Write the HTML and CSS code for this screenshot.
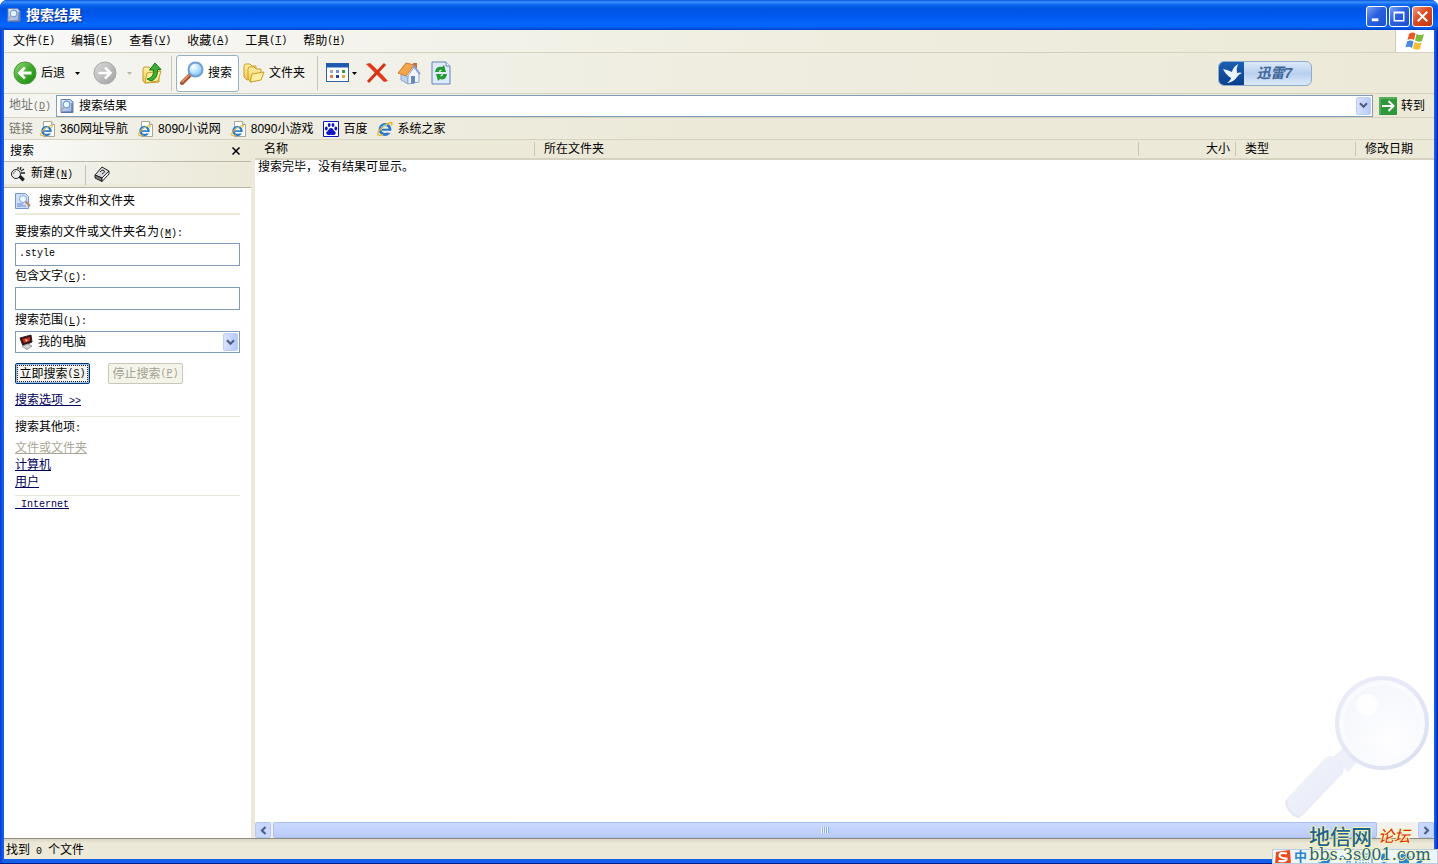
FILE: index.html
```html
<!DOCTYPE html>
<html lang="zh-CN">
<head>
<meta charset="utf-8">
<title>搜索结果</title>
<link rel="stylesheet" href="styles.css">
</head>
<body>
<svg class="defs" aria-hidden="true">
  <defs>
    <linearGradient id="gGreen" x1="0" y1="0" x2="1" y2="1"><stop offset="0" stop-color="#9bd87c"/><stop offset=".5" stop-color="#3fa92c"/><stop offset="1" stop-color="#188a12"/></linearGradient>
    <linearGradient id="gGrey" x1="0" y1="0" x2="1" y2="1"><stop offset="0" stop-color="#dcdcdc"/><stop offset="1" stop-color="#9f9f9f"/></linearGradient>
    <linearGradient id="gFolder" x1="0" y1="0" x2="0" y2="1"><stop offset="0" stop-color="#fff3a6"/><stop offset="1" stop-color="#f0c64c"/></linearGradient>
    <radialGradient id="gLens" cx=".35" cy=".3" r=".8"><stop offset="0" stop-color="#fff"/><stop offset=".5" stop-color="#b8e2fb"/><stop offset="1" stop-color="#70b9ee"/></radialGradient>
    <linearGradient id="gPage" x1="0" y1="0" x2="1" y2="1"><stop offset="0" stop-color="#e8f1ff"/><stop offset="1" stop-color="#8fa9dc"/></linearGradient>
    <linearGradient id="gRing" x1="0" y1="0" x2="1" y2="1"><stop offset="0" stop-color="#eceef8"/><stop offset="1" stop-color="#dadff0"/></linearGradient>
    <radialGradient id="gGlass" cx=".6" cy=".7" r=".8"><stop offset="0" stop-color="#fefeff"/><stop offset="1" stop-color="#f3f5fc"/></radialGradient>
    <linearGradient id="gHandle" x1="0" y1="0" x2="1" y2="1"><stop offset="0" stop-color="#f5f6fc"/><stop offset="1" stop-color="#e4e8f5"/></linearGradient>
  </defs>
  <symbol id="doc" viewBox="0 0 16 16"><path d="M2 1.500h9.500l2.500 2.500v10.500H2z" fill="url(#gPage)" stroke="#6a7fb4"/><path d="M13 5v9M3 14h11" stroke="#52689f"/><circle cx="7.500" cy="6.500" r="3.300" fill="#e3f6ff" stroke="#7d9cc8" stroke-width="1.200"/><path d="M5 9l-3 4" stroke="#a8acb8" stroke-width="1.800"/></symbol>
  <symbol id="chev" viewBox="0 0 9 7"><path d="M1 1.200l3.500 3.500L8 1.200" fill="none" stroke="#4d6185" stroke-width="2.200"/></symbol>
  <symbol id="ie" viewBox="0 0 16 16"><circle cx="8" cy="8.500" r="5" fill="none" stroke="#2878c8" stroke-width="2.800"/><path d="M5 8.700h8.500" stroke="#2878c8" stroke-width="2"/><path d="M10.500 10.800h5" stroke="#f5f4ee" stroke-width="2"/><path d="M1.500 14.500C-1 12 5 4 14.500 1.500c1 .5.500 2-.500 3M2 14.500c1.500 0 3-.500 4-1.200" fill="none" stroke="#e6b52c" stroke-width="1.300"/><path d="M4 6.500Q7 3 10 4.500" fill="none" stroke="#7ec9f4"/></symbol>
  <symbol id="iepage" viewBox="0 0 16 16"><path d="M3.500.5h8l3 3v12h-11z" fill="#fff" stroke="#aaa698"/><path d="M11.500.5v3h3" fill="#eee" stroke="#aaa698"/><use href="#ie" x="0" y="3" width="13" height="13"/></symbol>
  <symbol id="folder" viewBox="0 0 22 20"><path d="M1 3l1-2h5l2 2h4v12l-9 2-3-3z" fill="url(#gFolder)" stroke="#c99c2c"/><path d="M5 6l1-2h5l2 2h5v10l-10 3-3-3z" fill="url(#gFolder)" stroke="#c99c2c"/><path d="M7 19L9 11l12-2-3 8z" fill="#fff0a0" stroke="#c99c2c"/></symbol>
</svg>
<div class="window">
  <header class="title">
    <svg class="i16"><use href="#doc"/></svg>
    <h1>搜索结果</h1>
    <div class="wbtns">
      <button class="wbtn" aria-label="最小化"><svg viewBox="0 0 20 20"><path d="M5 13.500h7" stroke="#fff" stroke-width="3"/></svg></button>
      <button class="wbtn" aria-label="最大化"><svg viewBox="0 0 20 20"><path d="M4.500 5.500h10v9h-10zM4 6h11" fill="none" stroke="#fff" stroke-width="1.500"/></svg></button>
      <button class="wbtn close" aria-label="关闭"><svg viewBox="0 0 20 20"><path d="M5 5l10 10M15 5L5 15" stroke="#fff" stroke-width="2.200"/></svg></button>
    </div>
  </header>
  <nav class="menu">
    <button>文件<span class="m">(<u>F</u>)</span></button>
    <button>编辑<span class="m">(<u>E</u>)</span></button>
    <button>查看<span class="m">(<u>V</u>)</span></button>
    <button>收藏<span class="m">(<u>A</u>)</span></button>
    <button>工具<span class="m">(<u>T</u>)</span></button>
    <button>帮助<span class="m">(<u>H</u>)</span></button>
    <div class="flag"><svg width="20" height="20" viewBox="0 0 20 20"><path d="M4 3q3-2.500 6.500-.500L9 9Q6 7 2.500 9z" fill="#e8582a"/><path d="M11.500 3q3.500 2 7.500 0l-2 7q-3.500 1.500-7-.500z" fill="#7dbb3c"/><path d="M2 10.500q3.500-2 6.500 0L7 17q-3-2-6.500-.500z" fill="#4a8be0"/><path d="M9.500 11q3.500 2 7 .5L15 18q-4 1.500-7-.500z" fill="#f5bd32"/></svg></div>
  </nav>
  <div class="tools">
    <button class="tb">
      <svg width="24" height="24" viewBox="0 0 24 24"><circle cx="12" cy="12" r="11" fill="url(#gGreen)" stroke="#48943a"/><path d="M18.500 12H7M12 6.500L6.500 12l5.500 5.500" fill="none" stroke="#fff" stroke-width="2.800"/></svg>后退</button>
    <button class="drop" aria-label="后退列表"><svg width="5" height="3" viewBox="0 0 5 3"><path d="M0 0h5L2.500 3z"/></svg></button>
    <button class="tb" aria-label="前进">
      <svg width="24" height="24" viewBox="0 0 24 24"><circle cx="12" cy="12" r="11" fill="url(#gGrey)" stroke="#a9a9a9"/><path d="M5.500 12H17M12 6.500l5.500 5.500-5.500 5.500" fill="none" stroke="#fff" stroke-width="2.600"/></svg></button>
    <button class="drop off" aria-label="前进列表"><svg width="5" height="3" viewBox="0 0 5 3"><path d="M0 0h5L2.500 3z" fill="#b8b5a8"/></svg></button>
    <button class="tb" aria-label="向上">
      <svg width="22" height="24" viewBox="0 0 22 24"><path d="M2 8l1-2h5l2 2h8v13L4 22l-2-2z" fill="url(#gFolder)" stroke="#c99c2c"/><path d="M4 22L6 12l14-2-3 10z" fill="#fff0a0" stroke="#c99c2c"/><path d="M6 18q7-1 6.500-9H8.500L14 2l6 6.500h-3.500Q17 18 10 20z" fill="#3caf35" stroke="#1c7a1c"/></svg></button>
    <i class="sep"></i>
    <button class="tb on">
      <svg width="24" height="24" viewBox="0 0 24 24"><path d="M2 22l8-8" stroke="#a8542c" stroke-width="4" stroke-linecap="round"/><path d="M2 21l7-7" stroke="#e5a070" stroke-width="1.500"/><circle cx="15.500" cy="8.500" r="7" fill="url(#gLens)" stroke="#6f9fd4" stroke-width="2"/></svg>搜索</button>
    <button class="tb fold"><svg width="22" height="20"><use href="#folder"/></svg>文件夹</button>
    <i class="sep"></i>
    <button class="tb ico view" aria-label="查看">
      <svg width="24" height="20" viewBox="0 0 24 20"><rect x=".5" y=".5" width="22" height="18" fill="#fff" stroke="#2d62a8"/><path d="M0 2.500h23" stroke="#1f58b0" stroke-width="4"/><path d="M4 7h3v3H4z" fill="#a8a8c0"/><path d="M10 7h3v3h-3z" fill="#6f8fd0"/><path d="M16 7h3v3h-3z" fill="#30a040"/><path d="M4 12h3v3H4z" fill="#e07850"/><path d="M10 12h3v3h-3z" fill="#203f98"/><path d="M16 12h3v3h-3z" fill="#e0a838"/></svg><svg width="5" height="3" viewBox="0 0 5 3"><path d="M0 0h5L2.500 3z"/></svg></button>
    <button class="tb ico" aria-label="删除"><svg width="24" height="24" viewBox="0 0 24 24"><path d="M1 3l4-1q8 7 18 18l-4 1Q10 12 1 3z" fill="#e23a1c"/><path d="M20 3L3 21" stroke="#d23216" stroke-width="3"/></svg></button>
    <button class="tb ico" aria-label="主页"><svg width="24" height="24" viewBox="0 0 24 24"><path d="M16 2h4v7h-4z" fill="#c96a38"/><path d="M4 12l7 4v7l-7-4z" fill="#bcd0f3" stroke="#8da5d1"/><path d="M11 15l6-9 5 7v8l-11 2z" fill="#f1f5ff" stroke="#8da5d1"/><path d="M1 12L9 2l8 2-8 11z" fill="#f5a64c" stroke="#cc7b30"/><path d="M16 4l7 9" stroke="#8da5d1" stroke-width="2"/><path d="M14 15h4v7l-4 1z" fill="#6588b8"/></svg></button>
    <button class="tb ico last" aria-label="刷新"><svg width="20" height="24" viewBox="0 0 20 24"><path d="M1 1h14l4 4v18H1z" fill="#dfeafc" stroke="#6282b9"/><path d="M15 1v4h4" fill="#fff" stroke="#6282b9"/><path d="M4 11q1-6 7-5l2-2 2 7H9l2-2Q8 8 8 11zM16 13q-1 7-7 5l-2 2-2-7h6l-2 2q3 1 3-2z" fill="#209c31"/></svg></button>
    <button class="thunder"><svg width="25" height="24" viewBox="0 0 25 24"><path d="M4 8q5 1 9 3 1-5 6-8-2 5-1 9 3-1 5 0-3 1-5 4-3 5-10 6 4-3 4-5-5-3-8-9z" fill="#e9f6ff"/></svg><span>迅雷7</span></button>
  </div>
  <div class="address">
    <label for="addr">地址<span class="m">(<u>D</u>)</span></label>
    <div class="field"><svg class="i16"><use href="#doc"/></svg><input id="addr" value="搜索结果"><button class="chev" aria-label="地址列表"><svg width="9" height="7"><use href="#chev"/></svg></button></div>
    <button class="go"><svg width="18" height="18" viewBox="0 0 18 18"><rect width="18" height="18" rx="1" fill="#2f9639"/><path d="M1 17V1h16" fill="none" stroke="#7cc47c"/><path d="M3 9h11M9.500 4l5 5-5 5" fill="none" stroke="#fff" stroke-width="2"/></svg>转到</button>
  </div>
  <nav class="links">
    <span>链接</span>
    <a href="#"><svg class="i16"><use href="#iepage"/></svg>360网址导航</a>
    <a href="#"><svg class="i16"><use href="#iepage"/></svg>8090小说网</a>
    <a href="#"><svg class="i16"><use href="#iepage"/></svg>8090小游戏</a>
    <a href="#"><svg class="i16" viewBox="0 0 16 16"><path d="M.5.5h15v15H.5z" fill="#fff" stroke="#1115c4"/><path d="M8 7q2 0 2.500 2c1 1.500 3 2 2 4q-1 1.500-4.500.7Q4.500 14.500 3.500 13c-1-2 1-2.500 2-4Q6 7 8 7z" fill="#1115c4"/><g fill="#1115c4"><ellipse cx="3.300" cy="7.500" rx="1.400" ry="1.900"/><ellipse cx="6.200" cy="4" rx="1.400" ry="2"/><ellipse cx="10" cy="4" rx="1.400" ry="2"/><ellipse cx="12.800" cy="7.500" rx="1.400" ry="1.900"/></g></svg>百度</a>
    <a href="#"><svg class="i16"><use href="#ie"/></svg>系统之家</a>
  </nav>
  <main>
    <aside>
      <div class="phead"><h2>搜索</h2><button aria-label="关闭"><svg width="8" height="8" viewBox="0 0 8 8"><path d="M.5.5l7 7M7.500.5l-7 7" stroke="#000" stroke-width="1.500"/></svg></button></div>
      <div class="ptools">
        <button><svg class="i16" viewBox="0 0 16 16"><circle cx="6" cy="8" r="4.500" fill="#eee" stroke="#222"/><path d="M9 11l4 4M8 1v2M11 1l-1 3M14 3l-3 2M15 7h-4" stroke="#222" stroke-width="1.300"/><path d="M3.500 8q0-2.500 2.500-3" fill="none" stroke="#888"/><path d="M10 10l4 4" stroke="#222" stroke-width="2.500"/></svg><span>新建<span class="m">(<u>N</u>)</span></span></button>
        <i class="psep"></i>
        <button aria-label="索引"><svg class="i16" viewBox="0 0 16 16"><path d="M1 9l7-8 7 4-7 7z" fill="#d8d8d8" stroke="#222"/><path d="M1 9v3l7 3.500V12z" fill="#777" stroke="#222"/><path d="M8 12l7-7v3l-7 7.500z" fill="#fff" stroke="#222"/><path d="M6 6q2-3 4-1.500T8 8" fill="none" stroke="#333"/></svg></button>
      </div>
      <form class="pane">
        <h3><svg class="i16" viewBox="0 0 16 16"><path d="M.5.500h10l3 3v12H.5z" fill="#cfe0ff" stroke="#7594d0"/><path d="M2 11h6M2 13h9" stroke="#6584c5"/><circle cx="8" cy="6" r="3.500" fill="#eefaff" stroke="#7ba5cf"/><path d="M10.500 8.500l4.500 4.500" stroke="#b8845c" stroke-width="2"/></svg>搜索文件和文件夹</h3>
        <label for="fname">要搜索的文件或文件夹名为<span class="m">(<u>M</u>):</span></label>
        <input id="fname" class="m" value=".style">
        <label for="ftext">包含文字<span class="m">(<u>C</u>):</span></label>
        <input id="ftext" class="m">
        <label for="scope">搜索范围<span class="m">(<u>L</u>):</span></label>
        <div class="field combo"><svg class="i16" viewBox="0 0 16 16"><path d="M2 4l11-3 1 7-9 4z" fill="#2c1114" stroke="#3a2222"/><path d="M4 5l8-2v4L6 9z" fill="#c42c1d"/><path d="M7 5l3 1-2 2z" fill="#ffd0a0"/><path d="M4 12l6-2 4 2-5 3.500z" fill="#d6d4d2" stroke="#999"/></svg><select id="scope"><option>我的电脑</option></select><span class="chev"><svg width="9" height="7"><use href="#chev"/></svg></span></div>
        <div class="acts"><button type="button" class="act def">立即搜索<span class="m">(<u>S</u>)</span></button><button type="button" class="act" disabled>停止搜索<span class="m">(<u>P</u>)</span></button></div>
        <a class="opt" href="#">搜索选项<span class="m"> &gt;&gt;</span></a>
        <section class="other">
          <p>搜索其他项<span class="m">:</span></p>
          <a class="off" href="#">文件或文件夹</a>
          <a href="#">计算机</a>
          <a href="#">用户</a>
        </section>
        <section class="net"><a class="m" href="#">&nbsp;Internet</a></section>
      </form>
    </aside>
    <div class="results">
      <table>
        <colgroup><col class="c1"><col><col class="c3"><col class="c4"><col class="c5"></colgroup>
        <thead><tr><th>名称</th><th>所在文件夹</th><th class="r">大小</th><th>类型</th><th>修改日期</th></tr></thead>
        <tbody><tr><td colspan="5">搜索完毕，没有结果可显示。</td></tr></tbody>
      </table>
      <svg class="glass" width="148" height="148" viewBox="0 0 148 148"><path d="M49 84L60 74l14 14-10 11z" fill="#eef0f9"/><path d="M3 125L42 84q7-3 13 3t4 13L18 143q-7 2-12-4t-3-14z" fill="url(#gHandle)"/><path d="M3 127q-2 5 3 11t10 6" fill="none" stroke="#e3e6f3" stroke-width="2"/><circle cx="98" cy="50" r="45" fill="url(#gGlass)" stroke="url(#gRing)" stroke-width="4"/><circle cx="98" cy="50" r="40" fill="none" stroke="#fafbfe" stroke-width="4"/><circle cx="83" cy="32" r="11" fill="#fff" opacity=".8"/></svg>
      <div class="scroll">
        <button aria-label="向左"><svg width="7" height="9" viewBox="0 0 7 9"><path d="M5.500 1L2 4.500 5.500 8" fill="none" stroke="#4d6185" stroke-width="2.200"/></svg></button>
        <div class="thumb"><i></i></div>
        <button aria-label="向右"><svg width="7" height="9" viewBox="0 0 7 9"><path d="M1.500 1L5 4.500 1.500 8" fill="none" stroke="#4d6185" stroke-width="2.200"/></svg></button>
      </div>
    </div>
  </main>
  <footer>找到<span class="m"> 0 </span>个文件</footer>
</div>
<div class="ime">
  <svg width="18" height="16" viewBox="0 0 18 16"><path d="M2 3l14-2 1 15H1z" fill="#e84a1c"/><path d="M13 4.500Q6 3 5.500 6t7 3.500q.5 3.500-8 2.500" fill="none" stroke="#fff" stroke-width="2.200"/></svg>
  <span>中</span>
  <svg width="116" height="16" viewBox="0 0 116 16" fill="#2c83c9"><path d="M8 14Q18 12 20 4q4 7-2 12h-8z"/><path d="M31 8q5-3 4 3M38 12h3v4h-3z" fill="none" stroke="#2c83c9"/><path d="M47 5h16v11H47z" fill="none" stroke="#2c83c9"/><path d="M50 8h10M50 11h10M50 14h10" stroke="#2c83c9" stroke-dasharray="2 1"/><circle cx="75" cy="8" r="3.500"/><path d="M70 16q5-6 10 0zM88 8l5-3h4l5 3-2 3v5H90v-5zM107 14l8-8v5l-5 5z"/></svg>
</div>
<div class="mark"><div><b>地信网</b><i>论坛</i></div><span>bbs.3s001.com</span></div>
</body>
</html>
```
FILE: styles.css
```css
* { box-sizing: border-box; }
body {
  margin: 0;
  position: relative;
  overflow: hidden;
  font: 12px/16px "Liberation Sans", "Noto Sans CJK SC", sans-serif;
  color: #000;
  background: #fff;
}
button, input, select { font: inherit; color: inherit; margin: 0; }
button { border: 0; padding: 0; background: none; display: flex; align-items: center; white-space: nowrap; }
h1, h2, h3, p { margin: 0; font-size: 12px; font-weight: normal; }
svg { flex: none; display: block; }
.defs { position: absolute; width: 0; height: 0; }
.i16 { width: 16px; height: 16px; }
.m { font-family: "Liberation Mono", "Noto Sans CJK SC", monospace; font-size: 10px; white-space: pre; }

.window {
  display: flex;
  flex-direction: column;
  height: 100vh;
  padding: 0 4px 4px;
  background: linear-gradient(90deg, #0a3ad8, #1560e8 3px, #1560e8 calc(100% - 3px), #0020a8);
  border-bottom: 1px solid #001c90;
  border-radius: 7px 7px 0 0;
}
.title {
  flex: none;
  height: 30px;
  margin: 0 -4px;
  padding: 0 5px 0 6px;
  display: flex;
  align-items: center;
  gap: 4px;
  border-radius: 7px 7px 0 0;
  background: linear-gradient(#0a52d8, #3a92ff 2px, #0a64ee 5px, #0054e3 9px, #0058ee 16px, #0366fc 24px, #0262f5 27px, #0040c8);
}
.title h1 { flex: 1; font-size: 14px; font-weight: bold; color: #fff; text-shadow: 1px 1px 1px #0a2a88; }
.wbtns { display: flex; gap: 2px; padding-top: 3px; }
.wbtn { width: 21px; height: 21px; border: 1px solid #fff; border-radius: 3px; background: linear-gradient(135deg, #7ba2f2, #2a5fe0 45%, #1c50cc); }
.wbtn.close { background: linear-gradient(135deg, #f09a80, #dd4a22 45%, #c03410); }

.menu {
  flex: none;
  height: 22px;
  padding-left: 9px;
  display: flex;
  gap: 16px;
  background: linear-gradient(90deg, #f8f8f7, #efedde 60%, #ece9d8);
}
.flag { margin-left: auto; width: 39px; background: #fff; border-left: 1px solid #cdc9b5; display: flex; align-items: center; justify-content: center; }

.tools, .address, .links {
  flex: none;
  display: flex;
  align-items: center;
  border-top: 1px solid #d6d2c0;
  background: linear-gradient(90deg, #f5f5f2, #efede0 50%, #ece9d8);
}
.tools { height: 41px; padding-left: 5px; }
.tb { height: 37px; padding: 0 4px; gap: 4px; }
.drop { width: 16px; height: 37px; justify-content: center; margin-right: 4px; }
.drop.off { margin-right: 0; }
.sep { width: 1px; height: 35px; margin: 0 4px; background: #c9c6b6; }
.tb.on { border: 1px solid #98b0c2; border-radius: 3px; background: #fff; padding: 0 6px 0 3px; }
.tb.fold { padding-right: 8px; }
.tb.ico { padding: 0 4px; }
.tb.view { gap: 2px; }
.tb.last { padding-left: 6px; }
.thunder {
  margin-left: auto;
  margin-right: 122px;
  width: 94px;
  height: 25px;
  border: 1px solid #8fabce;
  border-radius: 6px;
  background: linear-gradient(#dbe9fa, #b9cfee 50%, #dcebfb);
  overflow: hidden;
}
.thunder svg { background: linear-gradient(#1c60b4, #0b3f8c); }
.thunder span { flex: 1; text-align: center; font-size: 14px; font-weight: bold; font-style: italic; color: #3f6798; padding-right: 6px; }

.address { height: 24px; padding-left: 5px; color: #000; }
.address label { color: #77756c; width: 47px; }
.field { display: flex; align-items: center; height: 22px; background: #fff; border: 1px solid #7f9db9; }
.address .field { flex: 1; min-width: 0; padding: 0 1px 0 2px; gap: 4px; }
.field input, .field select { flex: 1; min-width: 0; border: 0; padding: 0; background: none; outline: 0; appearance: none; }
.chev { width: 15px; height: 18px; display: flex; align-items: center; justify-content: center; border-radius: 2px; border: 1px solid #bdcef5; background: linear-gradient(90deg, #d8e2fd, #b7c9f8); pointer-events: none; }
.go { gap: 4px; padding: 0 9px 0 6px; }

.links { height: 23px; padding-left: 5px; gap: 10px; border-bottom: 1px solid #d6d2c0; background: linear-gradient(90deg, #f1f0e8, #ece9d8 50%); }
.links span { color: #77756c; margin-right: -3px; }
.links a { display: flex; align-items: center; gap: 4px; color: #000; text-decoration: none; }

main { flex: 1; min-height: 0; display: flex; background: #fff; }
aside { width: 251px; flex: none; border-right: 4px solid #ece9d8; display: flex; flex-direction: column; }
.phead { height: 22px; display: flex; align-items: center; justify-content: space-between; padding: 0 11px 0 6px; background: linear-gradient(90deg, #fafbfb, #ece9d8); border-bottom: 1px solid #bcb9ab; }
.ptools { height: 26px; display: flex; align-items: center; padding: 0 6px; border-bottom: 1px solid #b5b2a5; box-shadow: inset 0 -3px #ece9d8; background: linear-gradient(90deg, #f3f3ef, #ece9d8); }
.ptools button { gap: 5px; padding-bottom: 2px; }
.psep { width: 1px; height: 20px; margin: 0 8px 0 12px; background: #c5c2b2; }
.pane { padding: 0 11px; display: flex; flex-direction: column; }
.pane h3 { height: 27px; display: flex; align-items: center; gap: 8px; border-bottom: 2px solid #ece9d8; margin-bottom: 8px; }
.pane label { line-height: 17px; margin: 1px 0; }
.pane > input { height: 23px; border: 1px solid #7f9db9; padding: 0 3px 3px; background: #fff; outline: 0; margin-bottom: 1px; }
.combo { padding: 0 1px 0 2px; gap: 4px; }
.acts { display: flex; gap: 18px; margin: 10px 0 8px; }
.act { height: 21px; width: 75px; justify-content: center; border: 1px solid #c9c7ba; border-radius: 2px; background: #f5f4ea; color: #a1a192; }
.act.def { border-color: #003c74; color: #000; background: #f6f5f0; box-shadow: inset 0 0 0 1px #9fbcec; outline: 1px dotted #222; outline-offset: -3px; }
.pane a { color: #00005c; text-decoration: underline; align-self: flex-start; }
.pane a.off { color: #aca899; }
.pane section { display: flex; flex-direction: column; border-top: 1px solid #ece9d8; line-height: 17px; }
.pane .other { margin-top: 6px; padding-top: 2px; }
.pane .other p { margin-bottom: 3px; }
.pane .net { margin-top: 4px; }

.results { flex: 1; min-width: 0; display: flex; flex-direction: column; position: relative; }
table { width: 100%; table-layout: fixed; border-collapse: separate; border-spacing: 0; }
.c1 { width: 280px; }
.c3 { width: 97px; }
.c4 { width: 120px; }
.c5 { width: 78px; }
th { height: 20px; padding: 1px 0 0 9px; text-align: left; font-weight: normal; line-height: 17px; background: linear-gradient(90deg, #c9c6b5, #c9c6b5) right center / 1px 14px no-repeat #ece9d8; border-bottom: 2px solid #d6d2c2; }
th:last-child { background: #ece9d8; }
th.r { text-align: right; padding-right: 6px; }
td { padding: 0 3px; line-height: 15px; }
.glass { position: absolute; right: 2px; bottom: 17px; }
.scroll { margin-top: auto; height: 16px; display: flex; gap: 2px; background: #f3f2ec; }
.scroll button { width: 16px; justify-content: center; border: 1px solid #b4c8f6; border-radius: 2px; background: #c8d7fc; }
.thumb { flex: 1; margin-right: 39px; display: flex; align-items: center; justify-content: center; border: 1px solid #a9bff0; border-radius: 2px; background: linear-gradient(#cbd9fd, #bacbf9); }
.thumb i { width: 8px; height: 6px; background: repeating-linear-gradient(90deg, #eef4fe 0 1px, #8cb0f8 1px 2px); }
footer { flex: none; height: 21px; padding: 3px 2px; background: linear-gradient(#d8d4c4, #ece9d8 4px); border-top: 1px solid #8f8d82; }

.ime { position: absolute; right: 0; bottom: 0; width: 166px; height: 15px; overflow: hidden; display: flex; align-items: center; gap: 2px; padding-left: 1px; background: #edf6fd; border: 1px solid #b9cfe0; color: #2c83c9; }
.ime span { font-size: 13px; font-weight: bold; }
.mark { position: absolute; right: 4px; bottom: 1px; width: 125px; white-space: nowrap; color: #1c6296; text-shadow: -1px 0 #fbf8a8, 1px 0 #fbf8a8, 0 -1px #fbf8a8, 0 1px #fbf8a8; }
.mark div { display: flex; align-items: center; height: 17px; margin-bottom: 2px; gap: 6px; line-height: 17px; }
.mark b { font-size: 21px; font-weight: 500; }
.mark i { font-size: 16px; color: #e02818; }
.mark span { display: block; font: 16px/16px "DejaVu Serif", serif; }
```
